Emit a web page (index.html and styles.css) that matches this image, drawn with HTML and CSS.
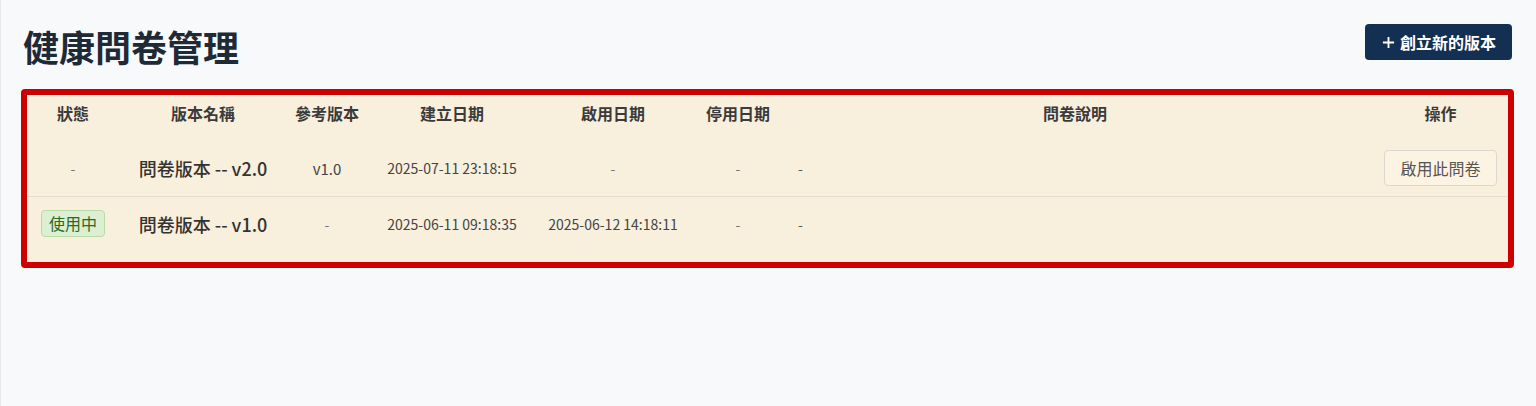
FILE: index.html
```html
<!DOCTYPE html>
<html lang="zh-Hant">
<head>
<meta charset="utf-8">
<title>健康問卷管理</title>
<link rel="stylesheet" href="styles.css">
</head>
<body>
<div class="page">
  <header class="page-header">
    <h1 class="page-title">健康問卷管理</h1>
    <button class="btn-primary" type="button">
      <svg class="plus" viewBox="0 0 14 14" width="13" height="13" aria-hidden="true"><path d="M7 1v12M1 7h12" stroke="currentColor" stroke-width="2" fill="none"/></svg>
      <span>創立新的版本</span>
    </button>
  </header>

  <section class="table-box">
    <table class="versions">
      <colgroup>
        <col class="c-status"><col class="c-name"><col class="c-ref"><col class="c-created">
        <col class="c-enabled"><col class="c-disabled"><col class="c-desc"><col class="c-action">
      </colgroup>
      <thead>
        <tr>
          <th>狀態</th>
          <th>版本名稱</th>
          <th>參考版本</th>
          <th>建立日期</th>
          <th>啟用日期</th>
          <th>停用日期</th>
          <th>問卷說明</th>
          <th class="action">操作</th>
        </tr>
      </thead>
      <tbody>
        <tr class="row-first">
          <td class="muted">-</td>
          <td class="name">問卷版本 -- v2.0</td>
          <td class="ref">v1.0</td>
          <td class="date">2025-07-11 23:18:15</td>
          <td class="muted">-</td>
          <td class="muted">-</td>
          <td class="desc">-</td>
          <td class="action"><button class="btn-outline" type="button">啟用此問卷</button></td>
        </tr>
        <tr>
          <td><span class="badge">使用中</span></td>
          <td class="name">問卷版本 -- v1.0</td>
          <td class="muted">-</td>
          <td class="date">2025-06-11 09:18:35</td>
          <td class="date">2025-06-12 14:18:11</td>
          <td class="muted">-</td>
          <td class="desc">-</td>
          <td class="action"></td>
        </tr>
      </tbody>
    </table>
  </section>
</div>
</body>
</html>
```

FILE: styles.css
```css
* { box-sizing: border-box; }

html, body {
  margin: 0;
  height: 100%;
}

body {
  background: #f8f9fb;
  border-left: 1px solid #e6e8eb;
  font-family: "Noto Sans CJK TC", "Noto Sans", sans-serif;
  color: #333;
}

.page {
  padding: 24px 22px 0 20px;
}

.page-header {
  display: flex;
  justify-content: space-between;
  align-items: flex-start;
}

.page-title {
  margin: 0 0 0 2px;
  font-size: 36px;
  line-height: 44px;
  font-weight: 700;
  color: #1f2a37;
}

.btn-primary {
  display: flex;
  align-items: center;
  gap: 5px;
  height: 36px;
  margin-right: 2px;
  padding: 0 16px 0 17px;
  border: none;
  border-radius: 4px;
  background: #132f52;
  color: #fff;
  font-family: inherit;
  font-size: 16px;
  font-weight: 700;
}

.plus { display: block; }

.table-box {
  margin-top: 21px;
  border: 6px solid #cc0000;
  border-radius: 4px;
  background: #f8efdc;
  padding-bottom: 12px;
}

.versions {
  width: 100%;
  table-layout: fixed;
  border-collapse: collapse;
}

.c-status { width: 92px; }
.c-name { width: 168px; }
.c-ref { width: 80px; }
.c-created { width: 170px; }
.c-enabled { width: 152px; }
.c-disabled { width: 98px; }
.c-desc { width: 576px; }

.versions th {
  padding: 8px 0 17px;
  font-size: 16px;
  line-height: 20px;
  font-weight: 700;
  color: #3b3b3b;
  text-align: center;
}

.versions td {
  padding: 13px 0;
  text-align: center;
  font-size: 14px;
  color: #444;
  white-space: nowrap;
}

.versions .action {
  padding-left: 10px;
}

.row-first td {
  padding-top: 10px;
  padding-bottom: 10px;
  border-bottom: 1px solid #e4dccb;
}

.versions td.name {
  font-size: 18px;
  font-weight: 500;
  color: #333;
}

.versions td.ref {
  font-size: 15px;
}

.versions td.muted {
  color: #777;
}

.versions td.desc {
  text-align: left;
  padding-left: 11px;
  color: #555;
}

.btn-outline {
  height: 36px;
  padding: 0 15px;
  border: 1px solid #ddd8cd;
  border-radius: 4px;
  background: #fdf3e3;
  color: #555;
  font-family: inherit;
  font-size: 16px;
}

.badge {
  display: inline-block;
  padding: 2px 7px;
  border: 1px solid #b9dca6;
  border-radius: 4px;
  background: #dcefd2;
  color: #2d6a1e;
  font-size: 16px;
  line-height: 21px;
}
```
